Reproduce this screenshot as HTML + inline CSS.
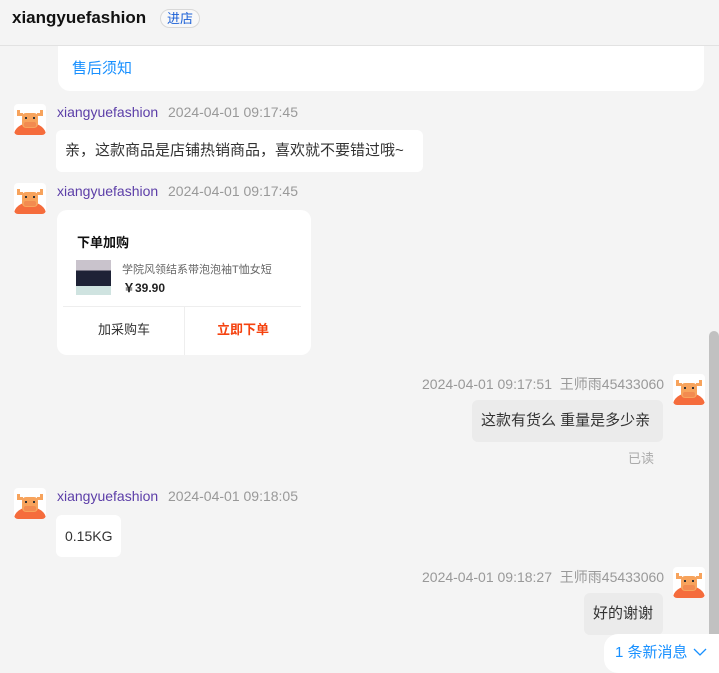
<!DOCTYPE html>
<html><head><meta charset="utf-8"><style>
*{margin:0;padding:0;box-sizing:border-box}
body{width:719px;height:673px;overflow:hidden;background:#f4f4f4;font-family:"Liberation Sans","Noto Sans CJK SC",sans-serif;position:relative}
.a{position:absolute}
.hdr{left:0;top:0;width:719px;height:46px;background:#f4f4f4;border-bottom:1px solid #e2e2e2;z-index:5}
.av{position:absolute;width:32px;height:31px;background:#fff;border-radius:4px;overflow:hidden}
.name{font-size:14px;color:#5c3ea8}
.time{font-size:14px;color:#999}
.bub{position:absolute;background:#fff;border-radius:6px;font-size:15px;color:#333;padding:0 9px;line-height:42px;height:42px;white-space:nowrap}
.me{background:#ebebeb}
</style></head><body>
<div class="a hdr"><div class="a" style="left:12px;top:8px;font-size:17px;font-weight:bold;color:#111">xiangyuefashion</div>
<div class="a" style="left:160px;top:9px;width:40px;height:19px;border:1px solid #d8d8d8;border-radius:10px;background:#f8f8f8;color:#1a5fd6;font-size:13px;text-align:center;line-height:17px">进店</div></div>

<div class="a" style="left:58px;top:20px;width:646px;height:71px;background:#fff;border-radius:12px"></div>
<div class="a" style="left:72px;top:57px;font-size:15px;color:#1890ff">售后须知</div>

<svg width="0" height="0" style="position:absolute"><defs><g id="cow">
<rect x="3" y="9" width="6" height="3" fill="#f7a35c"/><rect x="23" y="9" width="6" height="3" fill="#f7a35c"/>
<rect x="3" y="6" width="3" height="4" fill="#f7a35c"/><rect x="26" y="6" width="3" height="4" fill="#f7a35c"/>
<ellipse cx="16" cy="31" rx="16" ry="12" fill="#f56c3c"/>
<rect x="8" y="9" width="16" height="15" rx="4" fill="#f7a35c"/>
<rect x="11" y="13" width="2" height="2" fill="#333"/><rect x="19" y="13" width="2" height="2" fill="#333"/>
<rect x="10" y="18" width="12" height="5" rx="2" fill="#f28b50"/></g></defs></svg>

<div class="av" style="left:14px;top:104px"><svg width="32" height="31"><use href="#cow"/></svg></div>
<div class="a name" style="left:57px;top:104px">xiangyuefashion</div>
<div class="a time" style="left:168px;top:104px">2024-04-01 09:17:45</div>
<div class="bub" style="left:56px;top:130px;width:367px">亲，这款商品是店铺热销商品，喜欢就不要错过哦~</div>

<div class="av" style="left:14px;top:183px"><svg width="32" height="31"><use href="#cow"/></svg></div>
<div class="a name" style="left:57px;top:183px">xiangyuefashion</div>
<div class="a time" style="left:168px;top:183px">2024-04-01 09:17:45</div>
<div class="a" style="left:57px;top:210px;width:254px;height:145px;background:#fff;border-radius:10px">
<div class="a" style="left:20px;top:22px;font-size:13px;font-weight:bold;color:#111">下单加购</div>
<div class="a" style="left:19px;top:50px;width:35px;height:35px;background:linear-gradient(#c9c3cc 0,#c9c3cc 30%,#1e2236 30%,#1e2236 75%,#cfe3e0 75%)"></div>
<div class="a" style="left:65px;top:51px;font-size:11px;color:#666">学院风领结系带泡泡袖T恤女短</div>
<div class="a" style="left:66px;top:69px;font-size:12px;font-weight:bold;color:#222">￥39.90</div>
<div class="a" style="left:6px;top:96px;width:238px;border-top:1px solid #eee"></div>
<div class="a" style="left:127px;top:97px;height:48px;border-left:1px solid #eee"></div>
<div class="a" style="left:41px;top:109px;font-size:13px;color:#333">加采购车</div>
<div class="a" style="left:160px;top:109px;font-size:13px;color:#f5420f;font-weight:bold">立即下单</div>
</div>

<div class="a time" style="left:422px;top:374px">2024-04-01 09:17:51 &nbsp;王师雨45433060</div>
<div class="av" style="left:673px;top:374px"><svg width="32" height="31"><use href="#cow"/></svg></div>
<div class="bub me" style="left:472px;top:400px;width:191px">这款有货么 重量是多少亲</div>
<div class="a" style="left:628px;top:448px;font-size:13px;color:#aaa">已读</div>

<div class="av" style="left:14px;top:488px"><svg width="32" height="31"><use href="#cow"/></svg></div>
<div class="a name" style="left:57px;top:488px">xiangyuefashion</div>
<div class="a time" style="left:168px;top:488px">2024-04-01 09:18:05</div>
<div class="bub" style="left:56px;top:515px;width:65px;font-size:14px">0.15KG</div>

<div class="a time" style="left:422px;top:567px">2024-04-01 09:18:27 &nbsp;王师雨45433060</div>
<div class="av" style="left:673px;top:567px"><svg width="32" height="31"><use href="#cow"/></svg></div>
<div class="bub me" style="left:584px;top:593px;width:79px">好的谢谢</div>

<div class="a" style="left:709px;top:331px;width:10px;height:342px;background:#c1c1c1;border-radius:5px 5px 0 0"></div>
<div class="a" style="left:604px;top:634px;width:120px;height:39px;background:#fff;border-radius:14px 0 0 14px;font-size:15px;color:#1890ff;padding-left:11px;line-height:38px">1 条新消息</div>
<svg class="a" style="left:693px;top:647px" width="14" height="10"><path d="M1 2 L7 8 L13 2" fill="none" stroke="#1890ff" stroke-width="1.3"/></svg>
</body></html>
